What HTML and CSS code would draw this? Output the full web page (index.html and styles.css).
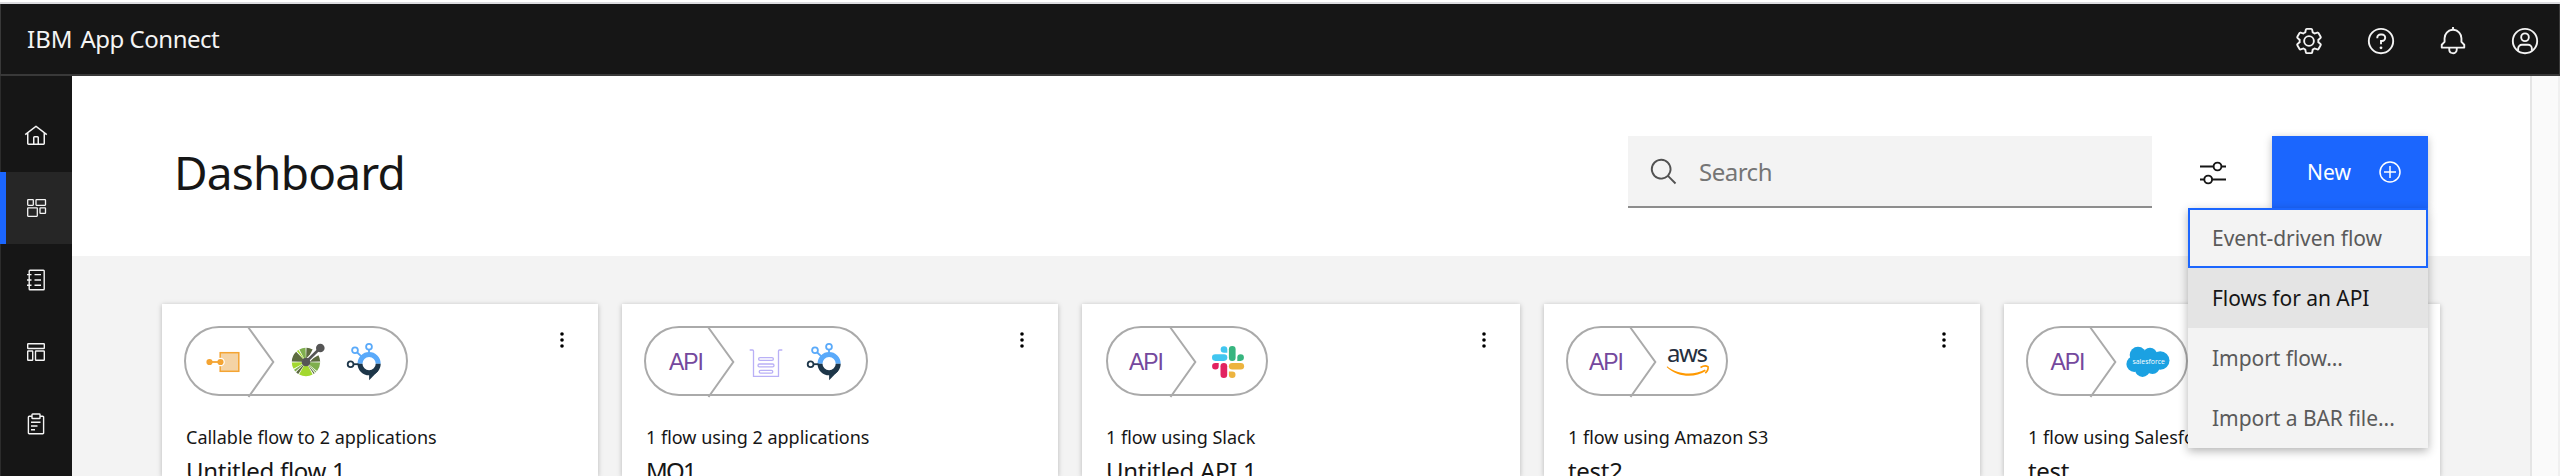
FILE: index.html
```html
<!DOCTYPE html>
<html lang="en">
<head>
<meta charset="utf-8">
<title>IBM App Connect</title>
<link rel="stylesheet" href="styles.css">
</head>
<body>
<div class="window-edge"></div>
<header class="header">
  <div class="brand"><span class="brand-prefix">IBM</span><span class="brand-name">App Connect</span></div>
  <div class="header-actions">
    <span class="header-action"><svg width="30" height="30" viewBox="0 0 32 32" fill="currentColor"><path d="M27,16.76c0-.25,0-.5,0-.76s0-.51,0-.77l1.92-1.68A2,2,0,0,0,29.3,11L26.94,7a2,2,0,0,0-1.73-1,2,2,0,0,0-.64.1l-2.43.82a11.35,11.35,0,0,0-1.31-.75l-.51-2.52a2,2,0,0,0-2-1.61H13.64a2,2,0,0,0-2,1.61l-.51,2.52a11.48,11.48,0,0,0-1.32.75L7.43,6.06A2,2,0,0,0,6.79,6,2,2,0,0,0,5.06,7L2.7,11a2,2,0,0,0,.41,2.51L5,15.24c0,.25,0,.5,0,.76s0,.51,0,.77L3.11,18.45A2,2,0,0,0,2.7,21L5.06,25a2,2,0,0,0,1.73,1,2,2,0,0,0,.64-.1l2.43-.82a11.35,11.35,0,0,0,1.31.75l.51,2.52a2,2,0,0,0,2,1.61h4.72a2,2,0,0,0,2-1.61l.51-2.52a11.48,11.48,0,0,0,1.32-.75l2.42.82a2,2,0,0,0,.64.1,2,2,0,0,0,1.73-1L29.3,21a2,2,0,0,0-.41-2.51ZM25.21,24l-3.43-1.16a8.86,8.86,0,0,1-2.71,1.57L18.36,28H13.64l-.71-3.55a9.36,9.36,0,0,1-2.7-1.57L6.79,24,4.43,20l2.72-2.4a8.9,8.9,0,0,1,0-3.13L4.43,12,6.79,8l3.43,1.16a8.86,8.86,0,0,1,2.71-1.57L13.64,4h4.72l.71,3.55a9.36,9.36,0,0,1,2.7,1.57L25.21,8,27.57,12l-2.72,2.4a8.9,8.9,0,0,1,0,3.13L27.57,20Z"/><circle cx="16" cy="16" r="5.2" fill="none" stroke="currentColor" stroke-width="2"/></svg></span>
    <span class="header-action"><svg width="30" height="30" viewBox="0 0 32 32" fill="currentColor"><circle cx="16" cy="16" r="13" fill="none" stroke="currentColor" stroke-width="2"/><path d="M17,8H15.5A4.49,4.49,0,0,0,11,12.5V13h2v-.5A2.5,2.5,0,0,1,15.5,10H17a2.5,2.5,0,0,1,0,5H15v4.5h2V17a4.5,4.5,0,0,0,0-9Z"/><circle cx="16" cy="23.3" r="1.5"/></svg></span>
    <span class="header-action"><svg width="30" height="30" viewBox="0 0 32 32" fill="currentColor"><path d="M28.7071,19.293,26,16.5859V13a10.0136,10.0136,0,0,0-9-9.9492V1H15V3.0508A10.0136,10.0136,0,0,0,6,13v3.5859L3.2929,19.293A1,1,0,0,0,3,20v3a1,1,0,0,0,1,1h7v.7768a5.152,5.152,0,0,0,4.5,5.1987A5.0057,5.0057,0,0,0,21,25V24h7a1,1,0,0,0,1-1V20A1,1,0,0,0,28.7071,19.293ZM19,25a3,3,0,0,1-6,0V24h6Zm8-3H5V20.4141L7.707,17.707A1,1,0,0,0,8,17V13a8,8,0,0,1,16,0v4a1,1,0,0,0,.293.707L27,20.4141Z"/></svg></span>
    <span class="header-action"><svg width="30" height="30" viewBox="0 0 32 32" fill="none" stroke="currentColor" stroke-width="2"><circle cx="16" cy="16" r="13"/><circle cx="16" cy="12" r="4.1"/><path d="M8.7 26.5V24a4 4 0 0 1 4-4h6.6a4 4 0 0 1 4 4v2.5"/></svg></span>
  </div>
</header>
<div class="shell">
  <nav class="sidebar">
    <a class="nav-item"><svg width="24" height="24" viewBox="0 0 32 32" fill="currentColor"><path d="M16.6123,2.2138a1.01,1.01,0,0,0-1.2427,0L1,13.4194l1.2427,1.5717L4,13.6209V26a2.0041,2.0041,0,0,0,2,2H26a2.0037,2.0037,0,0,0,2-2V13.63L29.7573,15,31,13.4282ZM18,26H14V18h4Zm2,0V18a2.0023,2.0023,0,0,0-2-2H14a2.002,2.002,0,0,0-2,2v8H6V12.0615l10-7.79,10,7.8005V26Z"/></svg></a>
    <a class="nav-item nav-item-active"><svg width="24" height="24" fill="none" stroke="currentColor" stroke-width="1.3"><rect x="3.7" y="3.7" width="5.6" height="5.6" rx=".5"/><rect x="12" y="3.7" width="9.5" height="5.6" rx=".5"/><rect x="3.7" y="11.8" width="9.6" height="8.5" rx=".5"/><rect x="16" y="11.8" width="5.5" height="5.6" rx=".5"/></svg></a>
    <a class="nav-item"><svg width="24" height="24" fill="none" stroke="currentColor" stroke-width="1.4"><rect x="5.2" y="2.2" width="15" height="19.6" rx=".8"/><path d="M3 6.6h4.5M3 12h4.5M3 17.300h4.5M10.5 6.6H17M10.5 12H17M10.5 17.300H17"/></svg></a>
    <a class="nav-item"><svg width="24" height="24" fill="none" stroke="currentColor" stroke-width="1.4"><rect x="3.7" y="3.7" width="16.6" height="4.8" rx=".6"/><rect x="3.7" y="11" width="5" height="9.3" rx=".6"/><rect x="11.5" y="11" width="8.8" height="9.3" rx=".6"/></svg></a>
    <a class="nav-item"><svg width="24" height="24" fill="none" stroke="currentColor" stroke-width="1.4"><path d="M8 4.2H5.2a.8.8 0 0 0-.8.8v16a.8.8 0 0 0 .8.8h13.6a.8.8 0 0 0 .8-.8v-16a.8.8 0 0 0-.8-.8H16"/><rect x="8" y="2" width="8" height="4.5" rx=".6"/><path d="M7 10.2h9.5M7 14h6.5M7 17.8h4"/></svg></a>
  </nav>
  <main class="main">
    <section class="toolbar">
      <h1 class="page-title">Dashboard</h1>
      <div class="search"><svg width="30" height="30" viewBox="0 0 32 32" fill="currentColor"><path d="M29,27.5859l-7.5521-7.5521a11.0177,11.0177,0,1,0-1.4141,1.4141L27.5859,29ZM4,13a9,9,0,1,1,9,9A9.01,9.01,0,0,1,4,13Z"/></svg><span class="search-placeholder">Search</span></div>
      <div class="filter"><svg width="30" height="30" fill="none" stroke="currentColor" stroke-width="1.9"><path d="M2 8.5h13.5M23.5 8.5H28M2 21.5h4M14 21.5h14"/><circle cx="19.5" cy="8.5" r="3.9"/><circle cx="10.2" cy="21.5" r="3.9"/></svg></div>
      <div class="new">
        <button class="new-button"><span class="new-label">New</span><svg width="24" height="24" fill="none" stroke="currentColor" stroke-width="1.5"><circle cx="12" cy="12" r="10"/><path d="M12 6v12M6 12h12"/></svg></button>
        <ul class="menu">
          <li class="menu-item menu-item-focus">Event-driven flow</li>
          <li class="menu-item menu-item-hover">Flows for an API</li>
          <li class="menu-item">Import flow...</li>
          <li class="menu-item">Import a BAR file...</li>
        </ul>
      </div>
    </section>
    <svg class="symbols" width="0" height="0">
      <symbol id="dots" viewBox="0 0 6 18"><circle cx="3" cy="3" r="1.8"/><circle cx="3" cy="9" r="1.8"/><circle cx="3" cy="15" r="1.8"/></symbol>
      <symbol id="hub" viewBox="0 0 40 44" overflow="visible">
        <path d="M11 22.7a9.1 9.1 0 0 1 18.2 0" fill="none" stroke="#5aaafa" stroke-width="5"/>
        <path d="M11 22.7a9.1 9.1 0 0 0 18.2 0" fill="none" stroke="#1d3649" stroke-width="5"/>
        <path d="M20.1 33v6.3l9.5-9.8z" fill="#1d3649"/>
        <g fill="none" stroke="#5aaafa" stroke-width="1.8"><circle cx="20" cy="5.7" r="2.9"/><circle cx="6" cy="9.3" r="2.9"/><path d="M20 8.6v5M8.2 11.5l5 4.6"/></g>
        <g fill="none" stroke="#1d3649" stroke-width="1.8"><circle cx="1.6" cy="23.2" r="2.9"/><path d="M4.5 23.2h5"/></g>
      </symbol>
    </svg>
    <section class="cards">
      <article class="card">
        <div class="card-head">
          <div class="pill"><svg class="pill-art" width="224" height="70">
            <path class="chevron" d="M64 1l25.3 35L64.5 71"/>
            <rect x="36.2" y="26.7" width="18.6" height="18.6" fill="#f4d3a5" stroke="#f4a433" stroke-width="1.5"/><circle cx="36.5" cy="36" r="4.3" fill="#fff"/><path d="M25.5 36h11" stroke="#f4a433" stroke-width="1.8"/><circle cx="25.5" cy="36" r="3.1" fill="#f4a433"/><circle cx="36.5" cy="36" r="3.1" fill="#f4a433"/>
            <g class="segments">
              <circle cx="122" cy="36" r="9" pathLength="360" stroke="#5d6b3f" stroke-dasharray="27 333" stroke-dashoffset="-331"/>
              <circle cx="122" cy="36" r="9" pathLength="360" stroke="#5d6b3f" stroke-dasharray="26 334" stroke-dashoffset="-272"/>
              <circle cx="122" cy="36" r="9" pathLength="360" stroke="#7fae4e" stroke-dasharray="26 334" stroke-dashoffset="-242"/>
              <circle cx="122" cy="36" r="9" pathLength="360" stroke="#a3d82f" stroke-dasharray="8 352" stroke-dashoffset="-230"/>
              <circle cx="122" cy="36" r="9" pathLength="360" stroke="#5d6b3f" stroke-dasharray="44 316" stroke-dashoffset="-182"/>
              <circle cx="122" cy="36" r="9" pathLength="360" stroke="#a3d82f" stroke-dasharray="27 333" stroke-dashoffset="-151"/>
              <circle cx="122" cy="36" r="9" pathLength="360" stroke="#7fae4e" stroke-dasharray="9 351" stroke-dashoffset="-138"/>
              <circle cx="122" cy="36" r="9" pathLength="360" stroke="#5d6b3f" stroke-dasharray="11 349" stroke-dashoffset="-123"/>
              <circle cx="122" cy="36" r="9" pathLength="360" stroke="#a3d82f" stroke-dasharray="57 303" stroke-dashoffset="-62"/>
              <circle cx="122" cy="36" r="9" pathLength="360" stroke="#5d6b3f" stroke-dasharray="5 355" stroke-dashoffset="-52"/>
              <circle cx="122" cy="36" r="9" pathLength="360" stroke="#7fae4e" stroke-dasharray="5 355" stroke-dashoffset="-43"/>
              <circle cx="122" cy="36" r="9" pathLength="360" stroke="#7fae4e" stroke-dasharray="37 323" stroke-dashoffset="-2"/>
            </g>
            <path d="M122 36l14.3-14" stroke="#fff" stroke-width="5"/><path d="M122 36l14.3-14" stroke="#555" stroke-width="2.6"/><circle cx="122" cy="36" r="4.3" fill="#555"/><circle cx="136.3" cy="22" r="4.3" fill="#555"/>
            <use href="#hub" x="165" y="15" width="40" height="44"/>
          </svg></div>
          <svg class="overflow" width="6" height="18"><use href="#dots"/></svg>
        </div>
        <p class="card-label">Callable flow to 2 applications</p>
        <h2 class="card-title">Untitled flow 1</h2>
      </article>
      <article class="card">
        <div class="card-head">
          <div class="pill"><svg class="pill-art" width="224" height="70">
            <path class="chevron" d="M64 1l25.3 35L64.5 71"/>
            <text class="api" x="25" y="43.5" textLength="35">API</text>
            <g fill="none" stroke="#b9b0f6" stroke-width="1.3"><path d="M105.7 24h2.8a1 1 0 0 1 1 1v25.3h25V25a1 1 0 0 1 1-1h2.8"/><rect x="114.6" y="31.6" width="14.8" height="2.8" rx="1.4"/><rect x="114" y="38" width="16" height="2.8" rx="1.4"/><rect x="115.2" y="44.4" width="13.6" height="2.8" rx="1.4"/></g>
            <use href="#hub" x="165" y="15" width="40" height="44"/>
          </svg></div>
          <svg class="overflow" width="6" height="18"><use href="#dots"/></svg>
        </div>
        <p class="card-label">1 flow using 2 applications</p>
        <h2 class="card-title card-title-tight">MQ1</h2>
      </article>
      <article class="card card-wide">
        <div class="card-head">
          <div class="pill pill-short"><svg class="pill-art" width="162" height="70">
            <path class="chevron" d="M64 1l25.3 35L64.5 71"/>
            <text class="api" x="23" y="43.5" textLength="35">API</text>
            <g fill="#41c6f0"><rect x="106" y="28.2" width="15.3" height="6.7" rx="3.3"/><path d="M121.3 26.8h-3.3a3.3 3.3 0 1 1 3.3-3.3z"/></g>
            <g fill="#37b57f"><rect x="122.9" y="20" width="6.7" height="15" rx="3.3"/><path d="M131.3 34.9v-3.3a3.3 3.3 0 1 1 3.3 3.3z"/></g>
            <g fill="#e22360"><rect x="114.5" y="36.9" width="6.7" height="15.2" rx="3.3"/><path d="M112.7 36.9v3.3a3.3 3.3 0 1 1-3.3-3.3z"/></g>
            <g fill="#edb43f"><rect x="122.9" y="36.9" width="15.2" height="6.7" rx="3.3"/><path d="M122.9 45.4h3.3a3.3 3.3 0 1 1-3.3 3.3z"/></g>
          </svg></div>
          <svg class="overflow" width="6" height="18"><use href="#dots"/></svg>
        </div>
        <p class="card-label">1 flow using Slack</p>
        <h2 class="card-title">Untitled API 1</h2>
      </article>
      <article class="card">
        <div class="card-head">
          <div class="pill pill-short"><svg class="pill-art" width="162" height="70">
            <path class="chevron" d="M64 1l25.3 35L64.5 71"/>
            <text class="api" x="23" y="43.5" textLength="35">API</text>
            <text class="aws" x="101" y="35.7" textLength="41">aws</text>
            <path d="M101 40.3c11 8.5 26.5 9.5 38 3.3l.8 1.4c-11 7.2-28 6.5-39-3.8z" fill="#f90"/><path d="M134.5 41.5c2.5-1.6 5.8-1.8 7.5-.9.5 2-.8 4.7-2.7 6.5" fill="none" stroke="#f90" stroke-width="1.6"/>
          </svg></div>
          <svg class="overflow" width="6" height="18"><use href="#dots"/></svg>
        </div>
        <p class="card-label">1 flow using Amazon S3</p>
        <h2 class="card-title">test2</h2>
      </article>
      <article class="card">
        <div class="card-head">
          <div class="pill pill-short"><svg class="pill-art" width="162" height="70">
            <path class="chevron" d="M64 1l25.3 35L64.5 71"/>
            <text class="api" x="24.5" y="43.5" textLength="35">API</text>
            <g fill="#1ba1e2"><circle cx="112" cy="29" r="8.3"/><circle cx="124" cy="28.7" r="7"/><circle cx="134.2" cy="34.5" r="9.3"/><circle cx="108.3" cy="38" r="7.9"/><circle cx="116.5" cy="43.7" r="7.3"/><circle cx="126.5" cy="41" r="7"/><rect x="108" y="29" width="24" height="15"/></g>
            <text class="salesforce" x="106.5" y="38.3" textLength="32.5" lengthAdjust="spacingAndGlyphs">salesforce</text>
          </svg></div>
          <svg class="overflow" width="6" height="18"><use href="#dots"/></svg>
        </div>
        <p class="card-label">1 flow using Salesforce</p>
        <h2 class="card-title">test</h2>
      </article>
    </section>
  </main>
  <aside class="rail"></aside>
</div>
</body>
</html>
```
FILE: styles.css
```css
* { box-sizing: border-box; }
html { background: #fff; }
body {
  margin: 0;
  height: 476px;
  overflow: hidden;
  display: flex;
  flex-direction: column;
  padding-top: 2px;
  font-family: "Noto Sans", "Open Sans", sans-serif;
  color: #161616;
}
h1, h2, p, ul { margin: 0; padding: 0; font-weight: 400; }
svg { display: block; flex: none; }
.symbols { position: absolute; }

.window-edge { height: 2px; flex: none; background: #dcdce0; }
.header {
  flex: none;
  height: 72px;
  display: flex;
  align-items: center;
  justify-content: space-between;
  background: #161616;
  border: 1px solid #393939;
  border-width: 0 1px 2px;
  color: #f4f4f4;
  padding-left: 26px;
}
.brand { display: flex; gap: 8px; font-size: 24px; line-height: 32px; }
.brand-name { letter-spacing: -.5px; }
.header-actions { display: flex; padding-top: 4px; margin-right: -2px; }
.header-action { width: 72px; display: flex; justify-content: center; }

.shell { flex: 1; min-height: 0; display: flex; }
.sidebar {
  width: 72px;
  flex: none;
  background: #161616;
  border-left: 1px solid #2c2c2c;
  padding-top: 24px;
  color: #f4f4f4;
}
.nav-item {
  height: 72px;
  margin-left: -1px;
  display: flex;
  align-items: center;
  justify-content: center;
}
.nav-item-active { background: #262626; box-shadow: inset 6px 0 #1b66fe; }

.main { flex: 1; min-width: 0; background: #f3f3f3; overflow: hidden; }
.toolbar {
  height: 180px;
  background: #fff;
  display: flex;
  align-items: flex-start;
  padding: 60px 102px 0;
}
.page-title { font-size: 46px; line-height: 72px; letter-spacing: -.8px; flex: 1; }
.search {
  width: 524px;
  height: 72px;
  display: flex;
  align-items: center;
  gap: 20px;
  padding-left: 21px;
  background: #f3f3f3;
  border-bottom: 2px solid #8d8d8d;
  font-size: 24px;
  letter-spacing: -.5px;
  color: #757575;
}
.search svg { color: #525252; margin-top: 2px; }
.filter { width: 120px; height: 72px; padding: 22px 0 0 46px; }
.new { position: relative; }
.new-button {
  width: 156px;
  height: 72px;
  border: 0;
  padding: 0 26px 0 35px;
  display: flex;
  align-items: center;
  justify-content: space-between;
  background: #1b66fe;
  color: #fff;
  font: 21px/28px "Noto Sans", "Open Sans", sans-serif;
  box-shadow: 0 2px 8px rgba(0, 0, 0, .25);
}
.menu {
  position: absolute;
  z-index: 2;
  right: 0;
  top: 72px;
  width: 240px;
  list-style: none;
  background: #f3f3f3;
  box-shadow: 0 3px 9px rgba(0, 0, 0, .3);
}
.menu-item {
  height: 60px;
  padding-left: 24px;
  display: flex;
  align-items: center;
  font-size: 21px;
  letter-spacing: -.05px;
  color: #5a5a5a;
  white-space: nowrap;
}
.menu-item-focus { box-shadow: inset 0 0 0 2px #1b66fe; }
.menu-item-hover { background: #e4e4e4; color: #161616; }

.cards {
  display: grid;
  grid-template-columns: 436px 436px 438px 436px 436px;
  gap: 24px;
  padding: 48px 90px 0;
}
.card {
  height: 172px;
  background: #fff;
  box-shadow: 0 1px 5px rgba(0, 0, 0, .25);
  padding: 22px 33px 0 22px;
}
.card-wide { padding-left: 24px; }
.card-wide .card-label, .card-wide .card-title { padding-left: 0; }
.card-head { display: flex; justify-content: space-between; align-items: flex-start; }
.overflow { margin-top: 5px; }
.pill {
  width: 224px;
  height: 70px;
  border: 2px solid #aaa;
  border-radius: 35px;
}
.pill-short { width: 162px; }
.pill-art { margin: -2px; overflow: visible; }
.chevron { fill: none; stroke: #aaa; stroke-width: 2; }
.segments { fill: none; stroke-width: 10.4; }
.api { font: 23px "Liberation Sans", sans-serif; fill: #74489d; }
.aws { font: 24px "Noto Sans", sans-serif; fill: #252f3e; }
.salesforce { font: 8px "Open Sans", sans-serif; fill: #fff; }
.card-label { margin-top: 27px; padding-left: 2px; font-size: 18px; line-height: 28px; white-space: nowrap; }
.card-title { margin-top: 2px; padding-left: 2px; font-size: 24px; line-height: 36px; letter-spacing: -.3px; white-space: nowrap; }
.card-title-tight { letter-spacing: -1.8px; }

.rail { width: 30px; flex: none; background: #fafafa; border-left: 2px solid #e5e5e5; border-right: 2px solid #f0f0f0; }
```
